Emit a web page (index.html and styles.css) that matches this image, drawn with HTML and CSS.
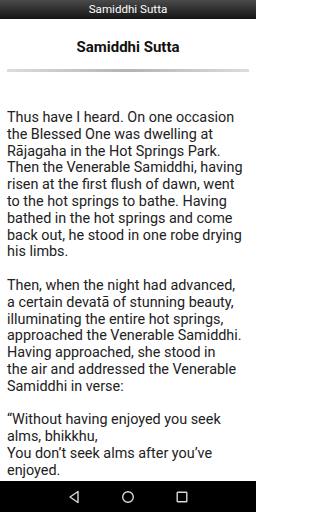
FILE: index.html
```html
<!DOCTYPE html>
<html>
<head>
<meta charset="utf-8">
<link rel="stylesheet" href="styles.css">
</head>
<body>
<div class="screen">
  <div class="appbar">Samiddhi Sutta</div>
  <div class="content">
    <h1 class="title">Samiddhi Sutta</h1>
    <div class="divider"></div>
    <p class="para">Thus have I heard. On one occasion the Blessed One was dwelling at Rājagaha in the Hot Springs Park. Then the Venerable Samiddhi, having risen at the first flush of dawn, went to the hot springs to bathe. Having bathed in the hot springs and come back out, he stood in one robe drying his limbs.</p>
    <p class="para">Then, when the night had advanced,<br>a certain devatā of stunning beauty, illuminating the entire hot springs, approached the Venerable Samiddhi. Having approached, she stood in<br>the air and addressed the Venerable Samiddhi in verse:</p>
    <p class="para">“Without having enjoyed you seek alms, bhikkhu,<br>You don’t seek alms after you’ve enjoyed.<br>First enjoy, bhikkhu, then seek alms.<br>Don’t let the time pass you by!”</p>
  </div>
  <div class="navbar">
    <svg class="nav-icon" width="14" height="14" viewBox="0 0 14 14"><path d="M11 1.5 L3 7 L11 12.5 Z" fill="none" stroke="#d8d8d8" stroke-width="1.4" stroke-linejoin="round"/></svg>
    <svg class="nav-icon" width="14" height="14" viewBox="0 0 14 14"><circle cx="7" cy="7" r="5.3" fill="none" stroke="#d8d8d8" stroke-width="1.4"/></svg>
    <svg class="nav-icon" width="14" height="14" viewBox="0 0 14 14"><rect x="2.2" y="2.2" width="9.6" height="9.6" rx="0.6" fill="none" stroke="#d8d8d8" stroke-width="1.4"/></svg>
  </div>
</div>
</body>
</html>
```
FILE: styles.css
```css
html, body {
  margin: 0;
  padding: 0;
  background: #fff;
}
.screen {
  width: 256px;
  height: 512px;
  display: flex;
  flex-direction: column;
  overflow: hidden;
  font-family: Roboto, "Liberation Sans", sans-serif;
}
.appbar {
  height: 19px;
  flex: none;
  background: linear-gradient(#4a4a4a, #151515);
  color: #fff;
  font-size: 11.6px;
  line-height: 19px;
  text-align: center;
}
.content {
  flex: 1;
  overflow: hidden;
  padding: 0 7px;
}
.title {
  margin: 18px 0 0;
  font-size: 15px;
  line-height: 20px;
  font-weight: bold;
  text-align: center;
  color: #111;
}
.divider {
  margin-top: 12px;
  height: 3px;
  background: linear-gradient(to right, #dcdcdc, #b4b4b4 50%, #dcdcdc);
}
.para {
  margin: 38px 0 0;
  font-size: 14.4px;
  line-height: 16.8px;
  color: #222;
}
.para + .para {
  margin-top: 16.8px;
}
.navbar {
  height: 31px;
  flex: none;
  background: #000;
  display: flex;
  justify-content: center;
  align-items: center;
  gap: 40px;
}
.nav-icon {
  display: block;
}
```
